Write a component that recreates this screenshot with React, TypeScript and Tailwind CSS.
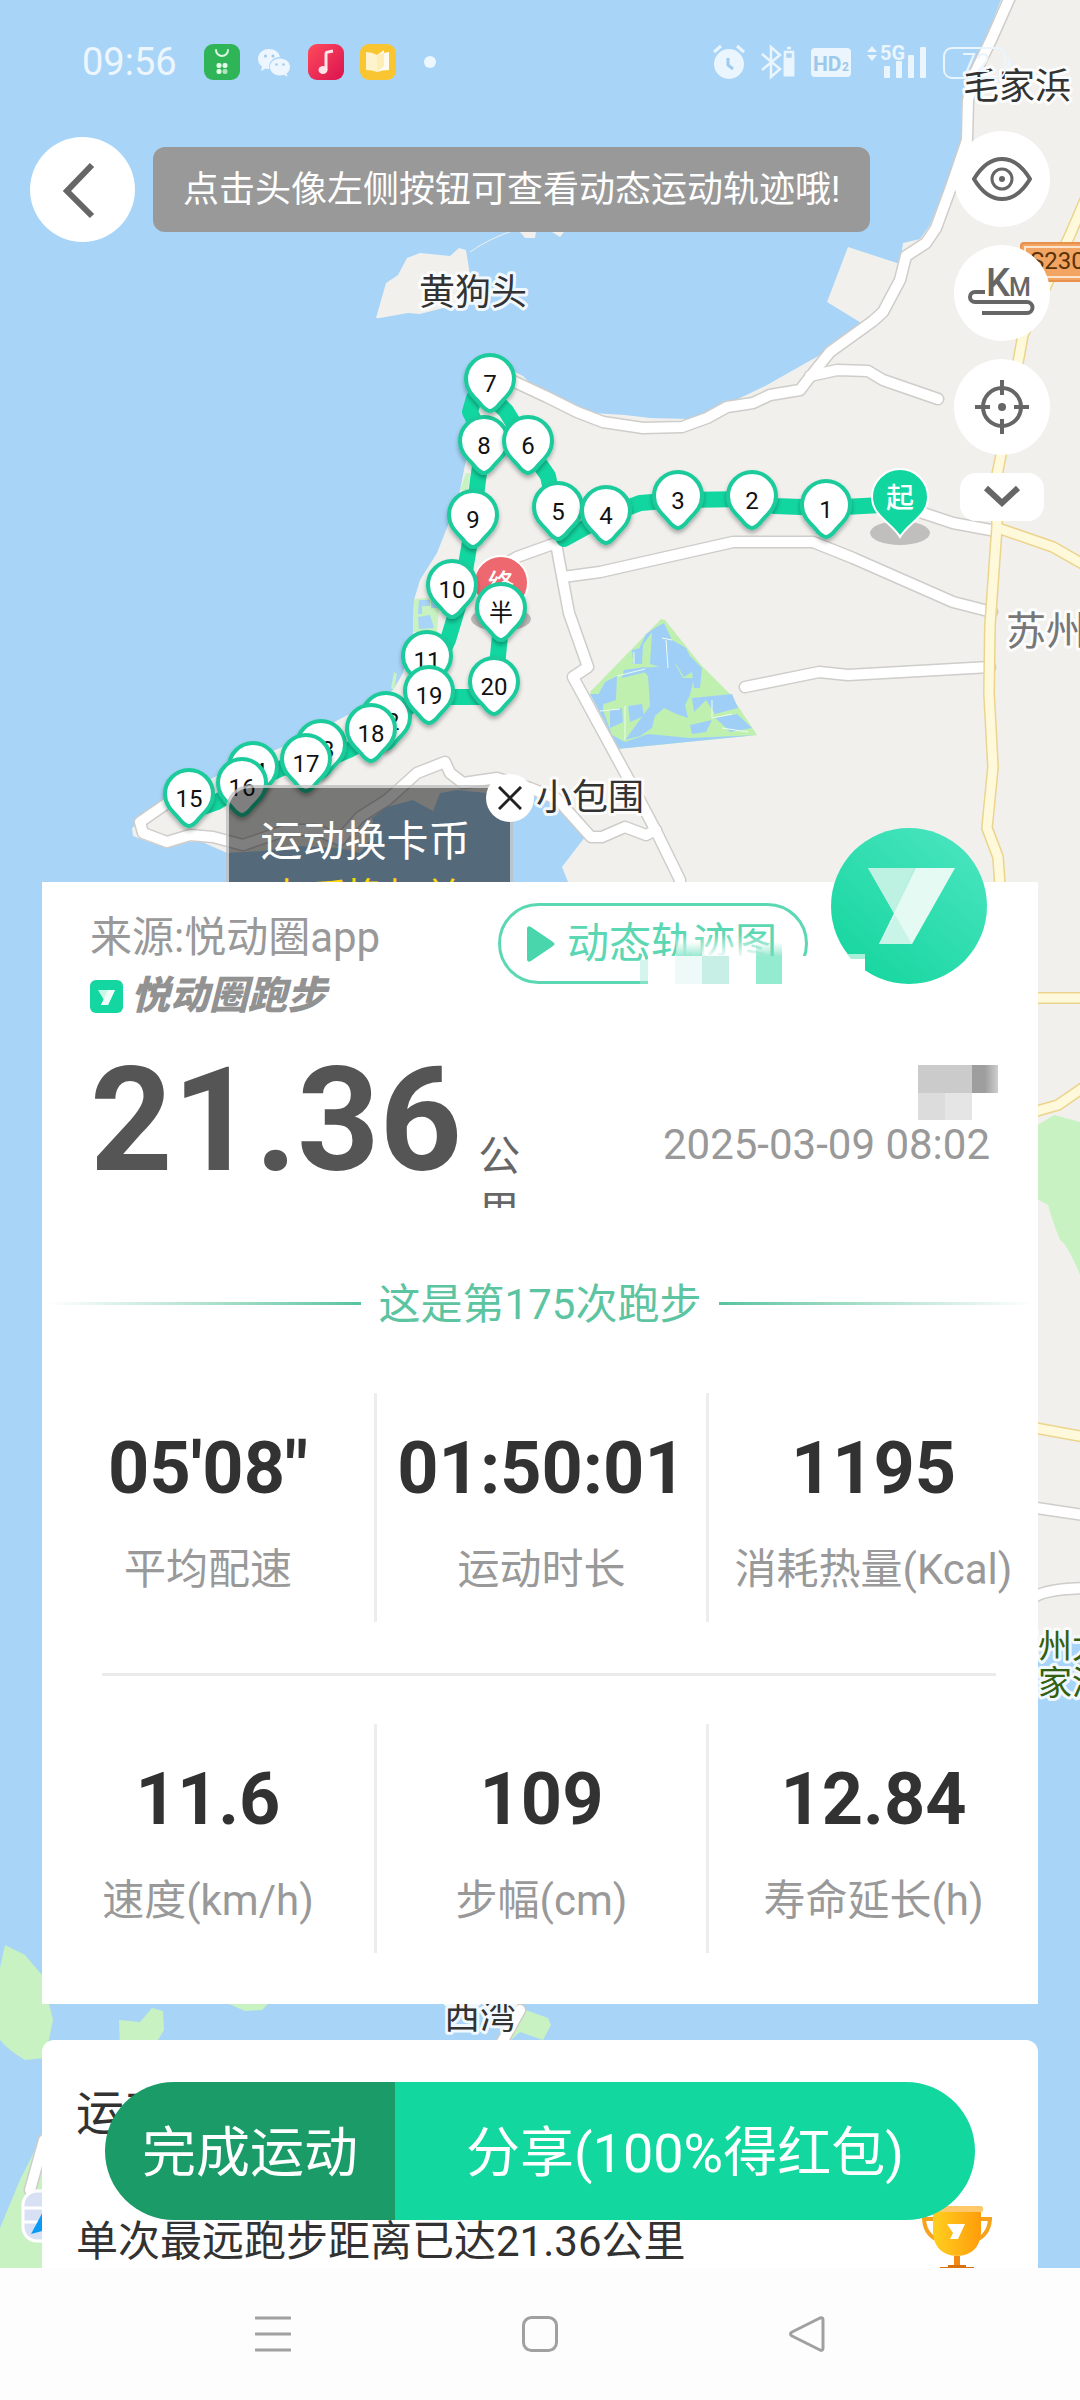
import React from "react";

type Pin = { label: string; x: number; y: number };

const pins: Pin[] = [
  { label: "14", x: 253, y: 768 },
  { label: "13", x: 321, y: 746 },
  { label: "12", x: 386, y: 718 },
  { label: "11", x: 427, y: 657 },
  { label: "15", x: 189, y: 795 },
  { label: "16", x: 242, y: 784 },
  { label: "17", x: 306, y: 760 },
  { label: "18", x: 371, y: 730 },
  { label: "19", x: 429, y: 692 },
  { label: "20", x: 494, y: 683 },
  { label: "10", x: 452, y: 586 },
  { label: "9", x: 473, y: 516 },
  { label: "8", x: 484, y: 442 },
  { label: "7", x: 490, y: 380 },
  { label: "6", x: 528, y: 442 },
  { label: "5", x: 558, y: 508 },
  { label: "4", x: 606, y: 512 },
  { label: "3", x: 678, y: 497 },
  { label: "2", x: 752, y: 497 },
  { label: "1", x: 826, y: 506 },
  { label: "半", x: 501, y: 609 },
];

const whiteRoads = [
  "M1011 -5L991 40L975 73L968 100L967 140L951 187L936 228L926 243L906 256L900 280L883 312L873 321L830 352L810 377L800 390L770 395L753 403L727 407L707 418L682 427L643 428L603 422L577 412L547 397L517 383L495 372",
  "M810 376L837 370L868 371L883 380L938 399",
  "M500 567L517 557L556 543L559 560L569 613L588 667L573 677L629 780L657 833L680 880L680 900",
  "M563 577L600 572L733 542L813 542L853 558L953 602L992 612",
  "M900 505L923 513L953 523L996 531",
  "M745 687L819 672L848 675L990 667",
  "M172 800L140 822L143 833L167 842L190 835L213 837L243 845L287 830L317 830L340 840L360 817L387 800L417 773L445 762L450 773L463 783L497 778L530 788L557 799L591 837L602 837L625 827L646 835L656 830",
  "M1030 1507L1090 1516",
  "M1030 1600Q1042 1588 1090 1588",
  "M520 2010L492 2060",
  "M44 2140L30 2190",
];

const yellowRoads = [
  "M1085 200L1070 235L1023 335L1002 450L997 475L997 527L990 625L989 693L993 767L987 828L998 857L1001 900",
  "M998 528L1053 547L1090 568",
  "M1030 998L1090 998",
  "M1030 1113L1058 1105L1090 1083",
  "M1030 1427L1090 1438",
];

const track =
  "M900 504L826 508L775 506L752 499L678 500L640 503L606 516L564 539L555 510L548 476L530 450L506 411L490 395L474 398L470 412L484 440L478 480L472 530L460 600L448 640L425 690L386 730L349 750L321 762L282 768L245 785L217 802L189 812";

function MapCanvas() {
  return (
    <svg
      className="absolute inset-0 h-full w-full"
      viewBox="0 0 1080 2268"
      preserveAspectRatio="xMidYMin slice"
      aria-label="运动轨迹地图"
    >
      <defs>
        <filter id="pinShadow" x="-30%" y="-30%" width="160%" height="170%">
          <feDropShadow dx="0" dy="3" stdDeviation="2" floodColor="#000" floodOpacity="0.3" />
        </filter>
      </defs>
      <rect width="1080" height="2268" fill="#a8d4f7" />
      <g fill="#f1f0ed">
        <path d="M1003 -5L985 40L969 73L962 100L961 140L945 187L930 225L920 239L903 243L900 264L848 247L827 302L863 324L820 355L767 385L740 398L727 403L700 415L687 419L650 418L625 415L593 413L573 405L553 395L535 388L523 376L495 362L474 385L468 420L466 460L460 490L450 520L437 553L420 580L414 600L413 632L403 673L393 690L363 707L300 740L233 767L167 803L132 828L133 836L157 845L200 841L227 853L262 851L300 846L340 848L360 853L374 835L372 818L387 807L413 800L433 811L440 793L457 790L487 793L533 788L560 807L585 837L575 850L562 867L568 882L600 930L700 1200L1000 1640L1040 1652L1056 1636L1080 1636L1085 -5Z" />
        <path d="M376 318L386 283L398 275L407 258L420 253L450 256L459 248L466 250L470 275L474 300L420 314L408 313L380 318Z" />
        <path d="M520 232L536 232L535 238L525 238ZM552 232L564 232L560 237Z" />
      </g>
      <path d="M470 252Q490 238 515 230" stroke="#f1f0ed" strokeWidth="1" fill="none" />
      <g fill="#c8f2c2">
        <path d="M1030 1130L1054 1115L1080 1122V1275Q1068 1245 1060 1240Q1052 1220 1048 1205L1030 1195Z" />
        <path d="M0 1968L5 1945L25 1955L42 1975L53 2020L45 2058L25 2060Q8 2050 0 2040Z" />
        <path d="M119 2020L140 2022L152 2008L163 2011L164 2030L155 2045L120 2048Z" />
        <path d="M220 2000L272 2000L262 2010L245 2011Z" />
        <path d="M520 2008L548 2018L551 2025L543 2040L520 2032L505 2045L508 2015Z" />
        <path d="M0 2228L20 2180L35 2150L60 2140V2268H0Z" />
        <path d="M414 599L440 597L437 632L413 632Z" />
        <path d="M520 376L524 380L522 390L516 384ZM466 473L470 473L468 490L460 490Z" />
        <path d="M394 672L397 674L394 690L391 688Z" />
      </g>
      <g fill="#a8d4f7">
        <path d="M419 600H430V606H422V614H418ZM418 617L430 615L434 628L419 629ZM431 601H438V608H431Z" />
      </g>
      <path d="M661 619L665 620L701 665L730 694L757 735L617 749L590 692Z" fill="#bff0b0" />
      <g fill="#9fcff7">
        <path d="M658 626L664 623L672 640L686 648L690 656L702 668L700 688L694 688L692 672L684 677L676 664L664 668L650 664L652 632L643 645L642 664L632 664L646 634Z" />
        <path d="M640 668L668 666L674 662L683 678L694 678L690 695L685 705L688 718L676 714L664 708L655 716L652 728L640 736L625 740L650 706L648 676Z" />
        <path d="M632 650L640 648L641 658L633 660ZM624 670L645 667L646 672L622 678ZM605 682L617 676L616 700L604 704L598 695ZM610 710L622 708L623 722L610 728ZM628 706L642 704L644 716L630 722Z" />
        <path d="M692 698L732 694L738 708L715 714L706 700L694 712ZM715 718L737 714L752 728L730 732L722 724ZM690 725L712 720L706 732L692 734Z" />
        <path d="M590 694L604 694L603 710L612 735L625 742L648 734L690 738L757 735L617 749L605 722Z" />
      </g>
      <g fill="none" stroke="#eefcec" strokeWidth="1">
        <path d="M617 676L645 669M600 711L620 709M625 706V740M634 652V664M712 700V718L732 714M722 728L748 732M662 638L672 640M668 668L666 640" />
      </g>
      <g fill="none" strokeLinejoin="round" strokeLinecap="round">
        {whiteRoads.map((d) => (
          <path key={d} d={d} stroke="#cfcdca" strokeWidth="13" />
        ))}
        {whiteRoads.map((d) => (
          <path key={d} d={d} stroke="#fff" strokeWidth="10" />
        ))}
        {yellowRoads.map((d) => (
          <path key={d} d={d} stroke="#ecd48c" strokeWidth="12" />
        ))}
        {yellowRoads.map((d) => (
          <path key={d} d={d} stroke="#fff9dc" strokeWidth="9" />
        ))}
      </g>
      <g>
        <rect x="23" y="2191" width="50" height="50" rx="14" fill="#d8e0f4" stroke="#fff" strokeWidth="3" />
        <path d="M24 2208H60M24 2222H60" stroke="#fff" strokeWidth="3" />
        <path d="M31 2234L46 2206V2230Z" fill="#0a9cf5" />
      </g>
      <g>
        <rect x="1021" y="243" width="90" height="38" rx="3" fill="#f2a463" stroke="#e8914d" strokeWidth="2" />
        <rect x="1025" y="247" width="90" height="30" fill="none" stroke="#fbe3cc" strokeWidth="2" />
        <text x="1030" y="269" fontSize="24" fill="#5a3206">S230</text>
      </g>
      <g
        fontSize="36"
        fill="#333"
        stroke="#fff"
        strokeOpacity="0.85"
        strokeWidth="6"
        strokeLinejoin="round"
        paintOrder="stroke"
      >
        <text x="963" y="99">毛家浜</text>
        <text x="419" y="305">黄狗头</text>
        <text x="536" y="810">小包围</text>
        <text x="444" y="2029">西湾</text>
        <text x="1006" y="645" fontSize="40" fill="#777">苏州市</text>
        <g fontSize="34" fill="#33600f">
          <text x="1004" y="1658">苏州太湖</text>
          <text x="1004" y="1695">国家湿地公园</text>
        </g>
      </g>
      <path d={track} fill="none" stroke="#12d6a0" strokeWidth="16" strokeLinejoin="round" />
      <path d="M429 697H494L501 625" fill="none" stroke="#12d6a0" strokeWidth="16" strokeLinejoin="round" />
      <ellipse cx="501" cy="619" rx="30" ry="12" fill="#b9b7b5" />
      <circle cx="501" cy="583" r="27" fill="#ee6870" stroke="#fff" strokeWidth="2" />
      <text x="501" y="593" fontSize="26" fontWeight="500" fill="#fff" textAnchor="middle">终</text>
      <ellipse cx="900" cy="533" rx="30" ry="12" fill="#c1bfbd" />
      <path
        d="M900 537C892 523 872 516 872 497A28 28 0 0 1 928 497C928 516 908 523 900 537Z"
        fill="#12d6a0"
        stroke="#fff"
        strokeWidth="2"
      />
      <text x="900" y="508" fontSize="28" fontWeight="500" fill="#fff" textAnchor="middle">起</text>
      {pins.map((p) => (
        <g key={p.label} transform={`translate(${p.x} ${p.y})`}>
          <path
            d="M0 31C-3 31 -5 29 -8 26C-14 18 -24 12 -24 -1A24 24 0 0 1 24 -1C24 12 14 18 8 26C5 29 3 31 0 31Z"
            fill="#fff"
            stroke="#1ecb9b"
            strokeWidth="4"
            filter="url(#pinShadow)"
          />
          <text y="12" fontSize="24" fill="#111" textAnchor="middle">{p.label}</text>
        </g>
      ))}
    </svg>
  );
}

function StatusBar() {
  return (
    <div className="flex h-31 items-center justify-between pr-[69px] pl-[82px] text-white/80">
      <div className="flex items-center gap-4">
        <span className="mr-[11px] text-[38px] leading-none">09:56</span>
        <svg className="size-9" viewBox="0 0 36 36">
          <rect width="36" height="36" rx="9" fill="#2fb457" />
          <path d="M12 6a6 6 0 0 0 12 0" fill="none" stroke="#d9f8e0" strokeWidth="2" strokeLinecap="round" />
          <g fill="#e2fae7">
            <rect x="12.500" y="19" width="5" height="5" rx="2" />
            <rect x="18.500" y="19" width="5" height="5" rx="2" />
            <rect x="12.500" y="25" width="5" height="5" rx="2" />
            <rect x="18.500" y="25" width="5" height="5" rx="2" opacity=".7" />
          </g>
        </svg>
        <svg className="size-9" viewBox="0 0 36 36">
          <path d="M13 5C6.500 5 2 9.500 2 15c0 3 1.500 5.500 4 7.500L5 27l4.500-2.500 4 .8C12 18 17 13 24 13 23 8 18.500 5 13 5Z" fill="#edf6fe" />
          <path d="M24 14.500c-6 0-10 4-10 8.500s4 8.500 10 8.500c1.500 0 2.500-.3 4-.7l3.500 2-.8-3.300c2.300-1.700 3.300-4 3.300-6.500 0-4.500-4-8.500-10-8.500Z" fill="#edf6fe" />
          <g fill="#9fc9ea">
            <circle cx="9.500" cy="12" r="1.500" />
            <circle cx="17" cy="12" r="1.500" />
            <circle cx="20.500" cy="20.500" r="1.200" />
            <circle cx="27.500" cy="20.500" r="1.200" />
          </g>
        </svg>
        <svg className="size-9" viewBox="0 0 36 36">
          <defs>
            <linearGradient id="music" x1="0" y1="0" x2="1" y2="1">
              <stop offset="0" stopColor="#ff4a5c" />
              <stop offset="1" stopColor="#d9124f" />
            </linearGradient>
          </defs>
          <rect width="36" height="36" rx="9" fill="url(#music)" />
          <ellipse cx="15" cy="26" rx="4.500" ry="4" fill="#ffe3e8" />
          <path d="M18 26V10q0-2 2-2l5-1" stroke="#ffe3e8" strokeWidth="3" fill="none" />
        </svg>
        <svg className="size-9" viewBox="0 0 36 36">
          <rect width="36" height="36" rx="9" fill="#f9c531" />
          <path d="M6 8q6 0 11 3v17q-5-2-11-2Z" fill="#fdf3cd" />
          <path d="M17 11l7-5v3l5-1v18q-6 0-12 2Z" fill="#fffaf0" />
          <path d="M24 9v13l-7 6V11Z" fill="#fdeeb5" />
        </svg>
        <span className="ml-3 size-3 rounded-full bg-[#eef7fe]" />
      </div>
      <div className="flex items-center gap-4">
        <svg className="h-9 w-8" viewBox="0 0 32 36" fill="none" stroke="#eaf5fd">
          <circle cx="16" cy="20" r="15" fill="#eaf5fd" stroke="none" />
          <path d="M1 8L8 2M31 8L24 2" strokeWidth="3" />
          <path d="M15 14v7l5 4" stroke="#9fcbef" strokeWidth="3" />
        </svg>
        <svg className="h-9 w-8.5" viewBox="0 0 34 36" fill="none" stroke="#eaf5fd" strokeWidth="2.500">
          <path d="M1 10L19 25L10 33V3L19 11L1 26" />
          <path d="M24 8h8v23h-8Z" />
          <path d="M24 15h8v16h-8ZM26 4h4" fill="#eaf5fd" />
        </svg>
        <svg className="h-9 w-10" viewBox="0 0 40 36">
          <rect y="4" width="40" height="29" rx="4" fill="#eaf5fd" />
          <text x="2" y="27" fontSize="21" fontWeight="700" fill="#9cc8ec">HD</text>
          <text x="31" y="27" fontSize="12" fontWeight="700" fill="#9cc8ec">2</text>
        </svg>
        <svg className="h-9 w-15" viewBox="0 0 60 36" fill="#eaf5fd">
          <path d="M0 8L5 2L10 8ZM0 11H10L5 17Z" />
          <text x="13" y="16" fontSize="20" fontWeight="700">5G</text>
          <rect x="17" y="22" width="6" height="12" rx="1" />
          <rect x="29" y="17" width="6" height="17" rx="1" />
          <rect x="41" y="11" width="6" height="23" rx="1" />
          <rect x="53" y="3" width="6" height="31" rx="1" />
        </svg>
        <svg className="h-9 w-17" viewBox="0 0 68 36">
          <rect x="1" y="4" width="61" height="30" rx="8" fill="none" stroke="#eaf5fd" strokeWidth="2" />
          <path d="M66 14v10" stroke="#eaf5fd" strokeWidth="3" />
          <text x="19" y="28" fontSize="25" fill="#eaf5fd">72</text>
        </svg>
      </div>
    </div>
  );
}

function RoundButton({ label, children }: { label: string; children: React.ReactNode }) {
  return (
    <button aria-label={label} className="flex size-24 items-center justify-center rounded-full bg-white">
      <svg className="size-18" viewBox="0 0 72 72" fill="none" stroke="#666" strokeWidth="4">
        {children}
      </svg>
    </button>
  );
}

function BrandMark() {
  return (
    <g>
      <path d="M37 40H124L64 87Z" fill="#b5f0de" />
      <path d="M37 40H82L64 87Z" fill="#bdf1e2" />
      <path d="M85 40H124L81 116H48Z" fill="#e6faf4" />
      <path d="M64 87L81 116H48Z" fill="#c9f4e8" />
    </g>
  );
}

const stats = [
  [
    { value: "05'08\"", label: "平均配速" },
    { value: "01:50:01", label: "运动时长" },
    { value: "1195", label: "消耗热量(Kcal)" },
  ],
  [
    { value: "11.6", label: "速度(km/h)" },
    { value: "109", label: "步幅(cm)" },
    { value: "12.84", label: "寿命延长(h)" },
  ],
];

function StatRow({ items }: { items: { value: string; label: string }[] }) {
  return (
    <dl className="grid grid-cols-3">
      {items.map((s) => (
        <div
          key={s.label}
          className="flex flex-col-reverse items-center border-[#ededed] pt-8 pb-[22px] text-center not-first:border-l-3"
        >
          <dt className="mt-[27px] text-[42px] leading-[60px] whitespace-nowrap text-[#999]">{s.label}</dt>
          <dd className="py-1 text-[72px] leading-20 font-bold whitespace-nowrap text-[#323232]">{s.value}</dd>
        </div>
      ))}
    </dl>
  );
}

function SummaryCard() {
  return (
    <section className="relative mx-[42px] bg-white pb-[51px]">
      <div className="flex items-start pr-[51px] pl-12">
        <div className="flex flex-1 flex-col pt-7">
          <p className="text-[42px] leading-14 whitespace-nowrap text-[#999]">来源:悦动圈app</p>
          <div className="mt-3 flex h-9 items-center gap-2">
            <svg className="size-[33px]" viewBox="0 0 33 33">
              <rect width="33" height="33" rx="6" fill="#14d6a0" />
              <path d="M8 10H25L18 25H11L14 20Z" fill="#c9f6e8" />
              <path d="M18 10H25L18 25H11Z" fill="#f0fdf9" />
            </svg>
            <span className="text-[39px] leading-9 font-black italic text-[#929292]">悦动圈跑步</span>
          </div>
        </div>
        <div className="relative mt-[21px] mr-[23px]">
          <button className="flex h-[81px] items-center gap-3 rounded-full border-3 border-[#5bd8b3] bg-white pr-7 pl-[26px] text-[42px] leading-none whitespace-nowrap text-[#5bd8b3]">
            <svg className="h-9 w-7" viewBox="0 0 28 36" fill="#49d6ad">
              <path d="M0 3Q0-1 4 1L26 16Q29 18 26 20L4 35Q0 37 0 33Z" />
            </svg>
            动态轨迹图
          </button>
          <svg className="pointer-events-none absolute right-0 bottom-0 h-14 w-42" viewBox="0 0 168 56">
            <defs>
              <linearGradient id="fadeDown" x1="0" y1="0" x2="0" y2="1">
                <stop offset="0" stopColor="#fff" stopOpacity="0" />
                <stop offset="1" stopColor="#fff" />
              </linearGradient>
              <linearGradient id="mintDown" x1="0" y1="0" x2="0" y2="1">
                <stop offset="0" stopColor="#6fdfbd" stopOpacity="0" />
                <stop offset="1" stopColor="#6fdfbd" stopOpacity=".7" />
              </linearGradient>
            </defs>
            <path d="M36 6H130V28H36Z" fill="url(#fadeDown)" opacity=".9" />
            <path d="M8 28H168V56H8Z" fill="#fff" />
            <path d="M0 32H8V56H0Z" fill="#a9ecd8" opacity=".5" />
            <path d="M36 14H62V28H36ZM116 14H142V28H116Z" fill="url(#mintDown)" />
            <path d="M35 28H62V56H35Z" fill="#eefaf7" />
            <path d="M62 28H89V56H62Z" fill="#c8efe6" />
            <path d="M116 28H142V56H116Z" fill="#93ebd0" />
          </svg>
        </div>
        <svg className="-mt-[54px] size-39" viewBox="0 0 156 156" aria-label="头像">
          <defs>
            <linearGradient id="avatar" x1="1" y1="0" x2="0.2" y2="1">
              <stop offset="0" stopColor="#4ee6c2" />
              <stop offset="1" stopColor="#16d69f" />
            </linearGradient>
          </defs>
          <circle cx="78" cy="78" r="78" fill="url(#avatar)" />
          <BrandMark />
          <path d="M0 128H34V156H0Z" fill="#fff" />
          <path d="M16 126H34V131H20Z" fill="#a9efda" />
        </svg>
      </div>
      <div className="mt-[35px] flex items-start pr-12 pl-12">
        <span className="text-[144px] leading-none font-bold text-[#555]">21.36</span>
        <span className="mt-20 ml-4 h-[79px] w-[42px] overflow-hidden text-[42px] leading-14 break-all text-[#666]">
          公里
        </span>
        <div className="ml-auto flex flex-col items-end pt-4">
          <svg className="-mr-2 h-14 w-20" viewBox="0 0 80 56" aria-hidden="true">
            <defs>
              <linearGradient id="nameFade" x1="0" y1="0" x2="1" y2="0">
                <stop offset="0.500" stopColor="#9e9e9e" />
                <stop offset="1" stopColor="#cfcfcf" />
              </linearGradient>
            </defs>
            <path d="M0 0H54V28H0Z" fill="#cbcbcb" />
            <path d="M54 0H80V28H54Z" fill="url(#nameFade)" />
            <path d="M0 28H27V55H0Z" fill="#dcdcdc" />
            <path d="M27 28H54V55H27Z" fill="#e5e5e5" />
          </svg>
          <time className="text-[42px] leading-12 whitespace-nowrap text-[#999]">2025-03-09 08:02</time>
        </div>
      </div>
      <div className="mt-[69px] flex items-center gap-[18px] px-1">
        <span className="h-[3px] flex-1 bg-linear-to-r from-white to-[#56c39f]" />
        <h2 className="-mb-1 text-[42px] leading-14 text-[#5cc4a1]">这是第175次跑步</h2>
        <span className="h-[3px] flex-1 bg-linear-to-l from-white to-[#56c39f]" />
      </div>
      <div className="mt-16">
        <StatRow items={stats[0]} />
        <hr className="mt-[51px] mr-[42px] mb-12 ml-[60px] border-t-3 border-[#ebebeb]" />
        <StatRow items={stats[1]} />
      </div>
    </section>
  );
}

function Trophy() {
  return (
    <svg className="h-16 w-18 shrink-0" viewBox="0 0 72 64">
      <defs>
        <linearGradient id="cup" x1="0" y1="0" x2="1" y2="0">
          <stop offset="0" stopColor="#ffcf1f" />
          <stop offset="1" stopColor="#ff9d0a" />
        </linearGradient>
      </defs>
      <path d="M12 14H3Q4 32 22 37M60 14H69Q68 32 50 37" fill="none" stroke="#f6a21c" strokeWidth="4" />
      <path d="M12 4H60V28Q58 50 36 51Q14 50 12 28Z" fill="url(#cup)" />
      <rect x="10" y="1" width="52" height="6" rx="2" fill="#ffc86b" />
      <path d="M26 19H44L37 34H29L32 28Z" fill="#fff" />
      <path d="M33 51H39V60H33Z" fill="#f08a10" />
      <path d="M27 60H45V62H53V64H19V62H27Z" fill="#d9720c" />
    </svg>
  );
}

export default function App() {
  return (
    <div className="flex min-h-screen flex-col bg-white font-['Roboto','Noto_Sans_CJK_SC',sans-serif]">
      <main className="relative isolate flex flex-1 flex-col overflow-hidden">
        <MapCanvas />
        <header className="relative h-[882px] overflow-hidden">
          <StatusBar />
          <div className="flex items-start justify-between px-[30px] pt-[7px]">
            <div className="mt-[6px] flex items-center gap-[18px]">
              <button aria-label="返回" className="flex size-[105px] items-center justify-center rounded-full bg-white">
                <svg className="h-15 w-10" viewBox="0 0 40 60" fill="none" stroke="#666" strokeWidth="6">
                  <path d="M29 5L4 31L29 56" />
                </svg>
              </button>
              <p className="flex h-[85px] items-center rounded-xl bg-[#999] px-[30px] text-[36px] whitespace-nowrap text-white">
                点击头像左侧按钮可查看动态运动轨迹哦!
              </p>
            </div>
            <div className="flex flex-col items-center gap-[18px]">
              <RoundButton label="显示">
                <path d="M8 36Q20 16 36 16T64 36Q52 56 36 56T8 36Z" strokeLinejoin="round" />
                <circle cx="36" cy="36" r="10" strokeWidth="3" />
                <circle cx="36" cy="36" r="3" fill="#666" stroke="none" />
              </RoundButton>
              <RoundButton label="公里标记">
                <g fill="#666" stroke="none" fontWeight="500">
                  <text x="20" y="39" fontSize="38">K</text>
                  <text x="43" y="39" fontSize="25">M</text>
                </g>
                <path d="M19 35H9A5 5 0 0 0 9 45H61A5 5 0 0 1 61 56H16" />
              </RoundButton>
              <RoundButton label="定位">
                <circle cx="36" cy="36" r="19" />
                <path d="M36 9V24M36 48V63M9 36H24M48 36H63" />
                <circle cx="36" cy="36" r="4" fill="#666" stroke="none" />
              </RoundButton>
              <button aria-label="展开" className="flex h-12 w-21 items-center justify-center rounded-2xl bg-white">
                <svg className="h-6 w-10" viewBox="0 0 40 24" fill="none" stroke="#666" strokeWidth="6">
                  <path d="M4 3L20 18L36 3" />
                </svg>
              </button>
            </div>
          </div>
          <div className="absolute top-[785px] left-[226px] w-[287px] rounded-tl-3xl border-3 border-white/60 bg-black/50 pt-[26px] pr-2 text-center">
            <p className="text-[42px] leading-14 text-white">运动换卡币</p>
            <p className="text-[39px] leading-14 text-[#ffd60a]">卡币换权益</p>
            <button
              aria-label="关闭"
              className="absolute -top-3.5 -right-6 flex size-12 items-center justify-center rounded-full bg-white"
            >
              <svg className="size-6" viewBox="0 0 24 24" stroke="#222" strokeWidth="3">
                <path d="M1 1L23 23M23 1L1 23" />
              </svg>
            </button>
          </div>
        </header>
        <SummaryCard />
        <section className="relative mx-[42px] mt-9 flex flex-1 flex-col justify-between rounded-t-xl bg-white pt-11 pr-[45px] pl-[34px]">
          <h2 className="text-[48px] leading-[60px] text-[#323232]">运动成就</h2>
          <div className="flex h-[63px] items-center justify-between">
            <p className="pt-2.5 text-[42px] leading-12 whitespace-nowrap text-[#323232]">单次最远跑步距离已达21.36公里</p>
            <Trophy />
          </div>
        </section>
        <div className="absolute inset-x-[105px] bottom-12 flex h-[138px] overflow-hidden rounded-full text-[54px] text-white">
          <button className="w-1/3 bg-[#1a9b68] pt-1 whitespace-nowrap">完成运动</button>
          <button className="flex-1 bg-[#12d79f] pt-1 whitespace-nowrap">分享(100%得红包)</button>
        </div>
      </main>
      <nav className="flex h-33 items-center justify-around bg-[#fdfdfd] px-35">
        <button aria-label="菜单">
          <svg className="size-9" viewBox="0 0 36 36" stroke="#a0a0a0" strokeWidth="3" strokeLinecap="round">
            <path d="M1 2H35M1 18H35M1 34H35" />
          </svg>
        </button>
        <button aria-label="主页">
          <svg className="size-9" viewBox="0 0 36 36" fill="none" stroke="#a0a0a0" strokeWidth="3">
            <rect x="1.500" y="1.500" width="33" height="33" rx="8" />
          </svg>
        </button>
        <button aria-label="后退">
          <svg className="size-9" viewBox="0 0 36 36" fill="none" stroke="#a0a0a0" strokeWidth="3" strokeLinejoin="round">
            <path d="M31 2Q34 1 34 4V32Q34 35 31 34L3 20Q0 18 3 16Z" />
          </svg>
        </button>
      </nav>
    </div>
  );
}
